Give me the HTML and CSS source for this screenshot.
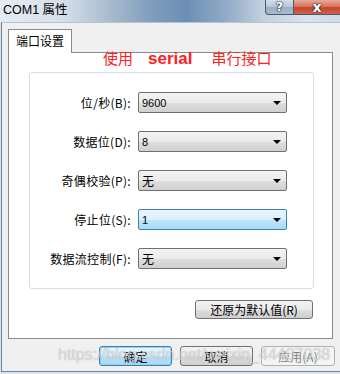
FILE: index.html
```html
<!DOCTYPE html>
<html>
<head>
<meta charset="utf-8">
<link rel="stylesheet" href="styles.css">
</head>
<body>
<div class="window">
  <div class="titlebar">
    <span class="title">COM1 属性</span>
    <div class="caption">
      <div class="cap help">?</div>
      <div class="cap close">x</div>
    </div>
  </div>
  <div class="client">
    <div class="tabs"><div class="tab">端口设置</div></div>
    <div class="panel">
      <div class="group">
        <div class="grid">
          <label class="lbl">位/秒(B):</label>
          <div class="combo"><span>9600</span><i class="arrow"></i></div>
          <label class="lbl">数据位(D):</label>
          <div class="combo"><span>8</span><i class="arrow"></i></div>
          <label class="lbl">奇偶校验(P):</label>
          <div class="combo"><span class="cjk">无</span><i class="arrow"></i></div>
          <label class="lbl">停止位(S):</label>
          <div class="combo focus"><span>1</span><i class="arrow"></i></div>
          <label class="lbl">数据流控制(F):</label>
          <div class="combo"><span class="cjk">无</span><i class="arrow"></i></div>
        </div>
      </div>
      <div class="restore-row"><button class="btn restore">还原为默认值(R)</button></div>
    </div>
    <div class="actions">
      <button class="btn default">确定</button>
      <button class="btn">取消</button>
      <button class="btn disabled">应用(A)</button>
    </div>
  </div>
  <div class="note"><span>使用</span><b>serial</b><span>串行接口</span></div>
  <div class="watermark">https://blog.csdn.net/weixin_44407038</div>
</div>
</body>
</html>
```

FILE: styles.css
```css
* { box-sizing: border-box; }
html, body { margin: 0; padding: 0; }
body {
  width: 340px;
  height: 374px;
  overflow: hidden;
  background: #dae4ee;
  font-family: "Noto Sans CJK SC", "Liberation Sans", sans-serif;
}
.window {
  position: relative;
  width: 340px;
  height: 374px;
}
.titlebar {
  height: 22px;
  display: flex;
  align-items: flex-start;
  background: linear-gradient(90deg, #e4ebf2 0%, #d6e0ea 18%, #a9bccf 32%, #7e9cbd 45%, #6d8fb6 55%, #90aac6 66%, #c4d2e0 78%, #d8e2ec 90%, #cfdbe7 100%);
}
.title {
  font-size: 12.5px;
  line-height: 20px;
  padding-left: 3px;
  color: #000;
  font-family: "Liberation Sans", "Noto Sans CJK SC", sans-serif;
}
.caption {
  margin-left: auto;
  display: flex;
  height: 15px;
}
.cap {
  height: 15px;
  border: 1px solid #4a5a6e;
  border-top: none;
  color: #fff;
  font-family: "DejaVu Sans", sans-serif;
  font-weight: bold;
  display: flex;
  align-items: center;
  justify-content: center;
  line-height: 14px;
  text-shadow: 0 0 1px #1c2a3a, 0 0 1px #1c2a3a, 0 0 2px #1c2a3a;
}
.help {
  width: 28px;
  font-size: 13px;
  border-radius: 0 0 0 4px;
  border-right: none;
  background: linear-gradient(180deg, #d4dee9 0%, #b7c6d7 50%, #9aaec5 51%, #a8bbd0 100%);
}
.close {
  width: 47px;
  font-size: 14px;
  border-right: none;
  background: linear-gradient(180deg, #e9a898 0%, #d8765f 45%, #c7432b 55%, #d0644a 100%);
}
.client {
  height: 350px;
  margin-left: 1px;
  border-left: 1px solid #71849b;
  border-top: 1px solid #b7c3cf;
  border-bottom: 1px solid #71849b;
  background: #f0f0f0;
  padding: 6px 0 0 6px;
}
.tabs { display: flex; }
.tab {
  width: 64px;
  height: 24px;
  margin-bottom: -1px;
  background: #fff;
  border: 1px solid #898c95;
  border-bottom: none;
  font-size: 12px;
  line-height: 21px;
  padding-left: 7px;
  position: relative;
  z-index: 1;
}
.panel {
  width: 325px;
  height: 287px;
  background: #fff;
  border: 1px solid #898c95;
  padding: 19px 19px 0 20px;
}
.group {
  width: 285px;
  height: 217px;
  border: 1px solid #d5dfe5;
  border-radius: 3px;
  padding: 19px 0 0 0;
}
.grid {
  display: grid;
  grid-template-columns: 101px 149px;
  column-gap: 7px;
  row-gap: 18px;
  grid-auto-rows: 21px;
}
.lbl {
  font-size: 12px;
  letter-spacing: 0.3px;
  text-align: right;
  align-self: center;
  color: #000;
  white-space: nowrap;
}
.combo {
  position: relative;
  height: 21px;
  border: 1px solid #707070;
  border-radius: 2px;
  background: linear-gradient(180deg, #f3f3f3 0%, #ebebeb 50%, #dedede 51%, #d0d0d0 100%);
  display: flex;
  align-items: center;
  padding-left: 3px;
  font-family: "Liberation Sans", sans-serif;
  font-size: 11px;
  color: #000;
}
.combo .cjk {
  font-family: "Noto Sans CJK SC", sans-serif;
  font-size: 12px;
}
.combo.focus {
  border-color: #3c7fb1;
  background: linear-gradient(180deg, #eaf6fd 0%, #d9f0fc 50%, #bee6fd 51%, #a7d9f5 100%);
}
.arrow {
  position: absolute;
  right: 5px;
  top: 8px;
  width: 0;
  height: 0;
  border-left: 4px solid transparent;
  border-right: 4px solid transparent;
  border-top: 4px solid #000;
}
.restore-row {
  display: flex;
  justify-content: flex-end;
  margin-top: 11px;
}
.btn {
  font-family: "Noto Sans CJK SC", sans-serif;
  font-size: 12px;
  color: #000;
  height: 20px;
  padding: 0;
  border: 1px solid #707070;
  border-radius: 3px;
  background: linear-gradient(180deg, #f2f2f2 0%, #ebebeb 50%, #dddddd 51%, #cfcfcf 100%);
  line-height: 17px;
}
.restore {
  width: 118px;
  height: 19px;
}
.actions {
  display: flex;
  justify-content: flex-end;
  gap: 8px;
  margin-top: 7px;
  padding-right: 5px;
}
.actions .btn { width: 73px; }
.actions .btn.disabled { width: 74px; }
.btn.default {
  border-color: #3c7fb1;
  background: linear-gradient(180deg, #eaf6fd 0%, #d9f0fc 50%, #bee6fd 51%, #a7d9f5 100%);
  box-shadow: inset 0 0 0 1px #8fd1f5;
}
.btn.disabled {
  border-color: #adb2b5;
  background: #f4f4f4;
  color: #838383;
}
.note {
  position: absolute;
  left: 103px;
  top: 48px;
  display: flex;
  align-items: baseline;
  color: #ff2020;
  font-size: 15px;
  line-height: 20px;
}
.note b {
  font-family: "Liberation Sans", sans-serif;
  font-weight: bold;
  font-size: 17px;
  margin: 0 19px 0 15px;
}
.watermark {
  position: absolute;
  left: 58px;
  top: 345px;
  font-family: "Liberation Sans", sans-serif;
  font-size: 16px;
  line-height: 20px;
  color: rgba(255, 255, 255, 0.55);
  text-shadow: 0 0 1px rgba(90, 90, 90, 0.5);
  white-space: nowrap;
  pointer-events: none;
}
```
